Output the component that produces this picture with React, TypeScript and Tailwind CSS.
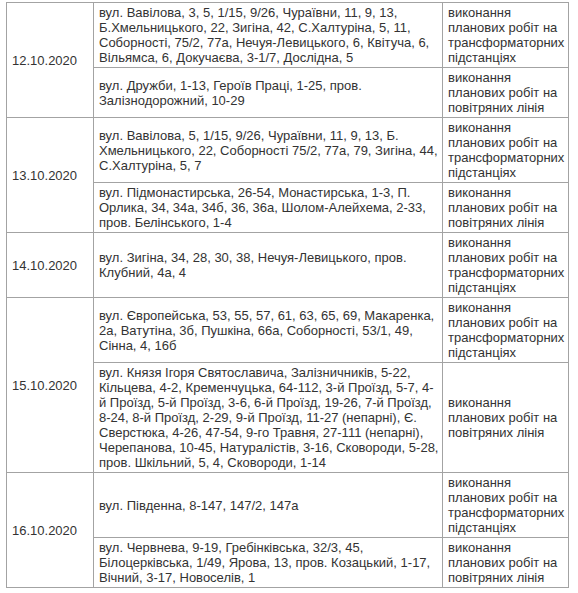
const TRANSFORMER = ["виконання", "планових робіт на", "трансформаторних", "підстанціях"];
const OVERHEAD = ["виконання", "планових робіт на", "повітряних лінія"];

type Job = { streets: string[]; work: string[] };
type Day = { date: string; jobs: Job[] };

const schedule: Day[] = [
  {
    date: "12.10.2020",
    jobs: [
      {
        streets: [
          "вул. Вавілова, 3, 5, 1/15, 9/26, Чураївни, 11, 9, 13,",
          "Б.Хмельницького, 22, Зигіна, 42, С.Халтуріна, 5, 11,",
          "Соборності, 75/2, 77а, Нечуя-Левицького, 6, Квітуча, 6,",
          "Вільямса, 6, Докучаєва, 3-1/7, Дослідна, 5",
        ],
        work: TRANSFORMER,
      },
      {
        streets: ["вул. Дружби, 1-13, Героїв Праці, 1-25, пров.", "Залізнодорожний, 10-29"],
        work: OVERHEAD,
      },
    ],
  },
  {
    date: "13.10.2020",
    jobs: [
      {
        streets: [
          "вул. Вавілова, 5, 1/15, 9/26, Чураївни, 11, 9, 13, Б.",
          "Хмельницького, 22, Соборності 75/2, 77а, 79, Зигіна, 44,",
          "С.Халтуріна, 5, 7",
        ],
        work: TRANSFORMER,
      },
      {
        streets: [
          "вул. Підмонастирська, 26-54, Монастирська, 1-3, П.",
          "Орлика, 34, 34а, 34б, 36, 36а, Шолом-Алейхема, 2-33,",
          "пров. Белінського, 1-4",
        ],
        work: OVERHEAD,
      },
    ],
  },
  {
    date: "14.10.2020",
    jobs: [
      {
        streets: ["вул. Зигіна, 34, 28, 30, 38, Нечуя-Левицького, пров.", "Клубний, 4а, 4"],
        work: TRANSFORMER,
      },
    ],
  },
  {
    date: "15.10.2020",
    jobs: [
      {
        streets: [
          "вул. Європейська, 53, 55, 57, 61, 63, 65, 69, Макаренка,",
          "2а, Ватутіна, 3б, Пушкіна, 66а, Соборності, 53/1, 49,",
          "Сінна, 4, 16б",
        ],
        work: TRANSFORMER,
      },
      {
        streets: [
          "вул. Князя Ігоря Святославича, Залізничників, 5-22,",
          "Кільцева, 4-2, Кременчуцька, 64-112, 3-й Проїзд, 5-7, 4-",
          "й Проїзд, 5-й Проїзд, 3-6, 6-й Проїзд, 19-26, 7-й Проїзд,",
          "8-24, 8-й Проїзд, 2-29, 9-й Проїзд, 11-27 (непарні), Є.",
          "Сверстюка, 4-26, 47-54, 9-го Травня, 27-111 (непарні),",
          "Черепанова, 10-45, Натуралістів, 3-16, Сковороди, 5-28,",
          "пров. Шкільний, 5, 4, Сковороди, 1-14",
        ],
        work: OVERHEAD,
      },
    ],
  },
  {
    date: "16.10.2020",
    jobs: [
      { streets: ["вул. Південна, 8-147, 147/2, 147а"], work: TRANSFORMER },
      {
        streets: [
          "вул. Червнева, 9-19, Гребінківська, 32/3, 45,",
          "Білоцерківська, 1/49, Ярова, 13, пров. Козацький, 1-17,",
          "Вічний, 3-17, Новоселів, 1",
        ],
        work: OVERHEAD,
      },
    ],
  },
];

function Lines({ lines }: { lines: string[] }) {
  return (
    <>
      {lines.map((l, i) => (
        <span key={i} className="block whitespace-nowrap">
          {l}
        </span>
      ))}
    </>
  );
}

const cell = "border border-[#a3a3a3] px-[5px] py-[2px] align-middle";

export default function App() {
  return (
    <div className="min-h-screen bg-white pl-[6px] pt-[2px] font-['Liberation_Sans',Arial,sans-serif] text-[13px] leading-[15px] text-[#333]">
      <table className="w-[562px] table-fixed border-collapse">
        <colgroup>
          <col className="w-[87px]" />
          <col className="w-[349px]" />
          <col className="w-[126px]" />
        </colgroup>
        <tbody>
          {schedule.map((day) =>
            day.jobs.map((job, i) => (
              <tr key={day.date + i}>
                {i === 0 && (
                  <td rowSpan={day.jobs.length} className={cell}>
                    {day.date}
                  </td>
                )}
                <td className={cell}>
                  <Lines lines={job.streets} />
                </td>
                <td className={cell}>
                  <Lines lines={job.work} />
                </td>
              </tr>
            ))
          )}
        </tbody>
      </table>
    </div>
  );
}
